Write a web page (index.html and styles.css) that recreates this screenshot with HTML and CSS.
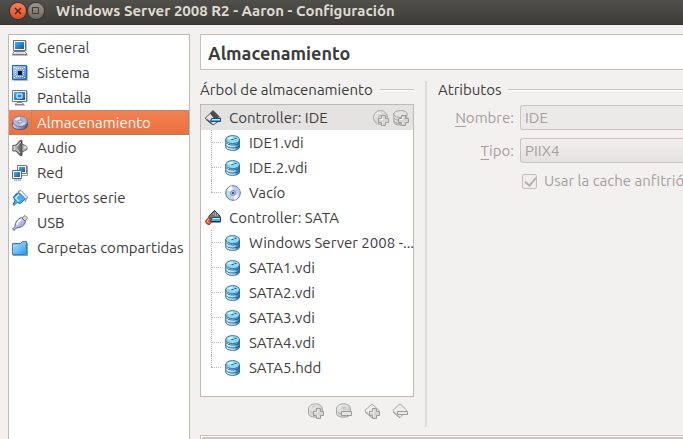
FILE: index.html
```html
<!DOCTYPE html>
<html lang="es">
<head>
<meta charset="utf-8">
<title>Windows Server 2008 R2 - Aaron - Configuración</title>
<link rel="stylesheet" href="styles.css">
</head>
<body>
<svg class="defs" aria-hidden="true">
  <defs>
    <linearGradient id="blue" x1="0" y1="0" x2="1" y2="1"><stop offset="0" stop-color="#3fb4f7"/><stop offset="1" stop-color="#0a56bd"/></linearGradient>
    <linearGradient id="chipfill" x1="0" y1="0" x2="1" y2="1"><stop offset="0" stop-color="#b3d6fc"/><stop offset="1" stop-color="#3a80e2"/></linearGradient>
    <linearGradient id="diskside" x1="0" x2="1"><stop offset="0" stop-color="#c9ecfd"/><stop offset=".45" stop-color="#8fd0f5"/><stop offset="1" stop-color="#2b78b5"/></linearGradient>
    <linearGradient id="drive" x1="0" x2="1"><stop offset="0" stop-color="#d6dbf0"/><stop offset=".5" stop-color="#8d94ba"/><stop offset="1" stop-color="#4b5174"/></linearGradient>
    <linearGradient id="folderfill" x1="0" y1="0" x2="1" y2="1"><stop offset="0" stop-color="#b5e3ff"/><stop offset="1" stop-color="#209af0"/></linearGradient>
    <linearGradient id="steel" x1="0" y1="0" x2="1" y2="0"><stop offset="0" stop-color="#e8e8e8"/><stop offset="1" stop-color="#4c4c4c"/></linearGradient>
    <linearGradient id="plugfill" x1="0" y1="0" x2="1" y2="1"><stop offset="0" stop-color="#fff"/><stop offset="1" stop-color="#7e80cf"/></linearGradient>
    <linearGradient id="gray" x1="0" y1="0" x2="1" y2="1"><stop offset="0" stop-color="#f3f3f2"/><stop offset="1" stop-color="#bcbcba"/></linearGradient>
  </defs>
  <symbol id="general" viewBox="0 0 16 16">
    <path d="M1.5.5h12v10h-12z" fill="#fff" stroke="#6c6c6c"/><path d="M3 2h9v7H3z" fill="url(#blue)"/>
    <path d="M2 11.500h11l2 3H.5z" fill="#f4f4f4" stroke="#777"/><path d="M3 13h9" stroke="#c4c4c4"/><path d="M0 15.500h16M14.500 1v10" stroke="#666" opacity=".4"/>
  </symbol>
  <symbol id="sistema" viewBox="0 0 16 16">
    <path d="M.5.5h14v14H.5z" fill="url(#chipfill)" stroke="#2860b5"/><path d="M15.500 1v14.500H1" stroke="#777" opacity=".5" fill="none"/>
    <path d="M4 3.500h1M6 3.500h1M8 3.500h1M10 3.500h1M4 11.500h1M6 11.500h1M8 11.500h1M10 11.500h1M3 5.500h1M3 7.500h1M3 9.500h1M11 5.500h1M11 7.500h1M11 9.500h1M2 2.500h1M12 2.500h1M2 12.500h1M12 12.500h1" stroke="#fff"/>
    <path d="M6 6h4v4H6z" fill="#071525"/>
  </symbol>
  <symbol id="pantalla" viewBox="0 0 16 16">
    <path d="M.5.5h14v11H.5z" fill="#fff" stroke="#777"/><path d="M2 2h11v8H2z" fill="url(#blue)"/>
    <path d="M5 4h5v4H5z" fill="#1787e8" stroke="#fff"/><path d="M5 12.500h5l2 2H3z" fill="#eee" stroke="#888"/><path d="M15.500 1v11M3 15.500h10" stroke="#888" opacity=".5"/>
  </symbol>
  <symbol id="almacen" viewBox="0 0 16 16">
    <path d="M.5 6v4.500c0 5.500 15 5.500 15 0V6z" fill="url(#drive)" stroke="#555b83"/><ellipse cx="8" cy="6.300" rx="7.300" ry="5.300" fill="#aeb4d3" stroke="#7b80a6"/>
    <path d="M2.500 5c1-2 3.500-3 5.500-3v4z" fill="#dfe4f6"/><path d="M8 6.500l5.500 1.500c-1 1.800-3 2.500-5 2.800z" fill="#cfd5ea"/><ellipse cx="8" cy="6.500" rx="2.200" ry="1.500" fill="#ebd7d4" stroke="#6f7599" stroke-width=".7"/>
  </symbol>
  <symbol id="audio" viewBox="0 0 16 16">
    <path d="M.8 5.500L4 5l4-4.500h2v15H8L4 11H.8z" fill="url(#steel)" stroke="#555"/><path d="M5 6l4-4M5 9l3 4" stroke="#d8d8d8"/>
    <path d="M10 4l5 2.500v3L10 12z" fill="#b8b8b8" stroke="#666"/><path d="M12 7h3" stroke="#fff"/>
  </symbol>
  <symbol id="red" viewBox="0 0 16 16">
    <path d="M5.500.5h9v8h-9z" fill="#fff" stroke="#777"/><path d="M7 2h6v5H7z" fill="url(#blue)"/><path d="M10 10.500h5.500V1" fill="none" stroke="#999"/>
    <path d="M.5 5.500h9v8h-9z" fill="#fff" stroke="#666"/><path d="M2 7h6v5H2z" fill="url(#blue)"/><path d="M2 15h7" stroke="#888"/>
  </symbol>
  <symbol id="serie" viewBox="0 0 16 16">
    <path d="M6 1.500l3-1L15.500 7 13 12M5 2.500L1 8M2 12l3-2" stroke="#66809c" fill="none"/>
    <path d="M7 2.500L13.500 9 8 13.500l-3-1-3 3L1 14.500l2-4L1.500 7z" fill="#46aef2" stroke="#2465a8"/><path d="M7 4.500L3.500 8 7 11.500" fill="none" stroke="#bce9ff" stroke-width="1.500"/>
  </symbol>
  <symbol id="usb" viewBox="0 0 16 16">
    <path d="M10 3l3-2.500 2.500 2.500L13 6z" fill="#ddd" stroke="#777"/><path d="M9.500 2.500l4 4c-1 4-4 6-9 6.500L2 15.500.5 14 3 11.500c0-4 2.500-7.500 6.500-9z" fill="url(#plugfill)" stroke="#5c5f9c"/><path d="M5 10c.5-3 2-4.500 4-5.500" stroke="#fff" fill="none" stroke-width="1.500"/>
  </symbol>
  <symbol id="carpeta" viewBox="0 0 16 16">
    <path d="M.5 3.500h8l2-2h4v13H.5z" fill="#7ebff0" stroke="#3a80c0"/><path d="M1 5h9l2-2h2v11H1z" fill="url(#folderfill)"/><path d="M15.500 3v12.500H1" stroke="#2b6097" fill="none" opacity=".6"/>
  </symbol>
  <symbol id="disco" viewBox="0 0 16 16">
    <path d="M.7 4.500v7.500c0 4.500 13.800 4.500 13.800 0V4.500z" fill="url(#diskside)" stroke="#2b6490" stroke-width=".9"/>
    <path d="M1 7.500c1 3.500 12.500 3.500 13.300 0M1 10.500c1 3.500 12.500 3.500 13.300 0" fill="none" stroke="#1d5887" stroke-width=".9"/><path d="M1.700 8.900c1.500 2.300 6 2.800 9 2M1.700 11.900c1.500 2.300 6 2.800 9 2" fill="none" stroke="#e0f6ff" stroke-width=".8"/>
    <ellipse cx="7.600" cy="4.600" rx="6.900" ry="4" fill="#8fd7fd" stroke="#2b6f9f" stroke-width=".9"/><path d="M2.500 4c1-2 3-2.600 5-2.600v2.600z" fill="#dff5ff"/><path d="M6.500 4.500h2M9.500 3.500h2" stroke="#135f9b"/>
  </symbol>
  <symbol id="cd" viewBox="0 0 16 16">
    <circle cx="8" cy="8" r="7.300" fill="#cbd3ef" stroke="#5b6e9e"/><path d="M8 8L2 5a7 7 0 0 1 5-4z" fill="#fff"/><path d="M8 8l6 3a7 7 0 0 1-5 4z" fill="#f5f0ff"/><path d="M8 8l2-6.500a7 7 0 0 1 5 5z" fill="#b9c7fa"/><path d="M8 8l-6 3a7 7 0 0 0 4 3.500z" fill="#aadcf0"/>
    <circle cx="8" cy="8" r="2.500" fill="#a9c9e9" stroke="#6685ad" stroke-width=".8"/><circle cx="8" cy="8" r="1" fill="#163c65"/>
  </symbol>
  <symbol id="ide" viewBox="0 0 16 16">
    <path d="M.5 8L8 .5 15.500 8v2L8 15 .5 9z" fill="#e4e4e4" stroke="#555"/><path d="M5 3.500L8 .5l6 6-1 2H9z" fill="#4b4b4b"/><path d="M2 9.500l5 4.500" stroke="#555" stroke-width="1.500"/>
    <path d="M6.500 8.500h9v3h-10z" fill="#46aef4" stroke="#0e4b88"/><path d="M7 9.500h8" stroke="#c5eaff"/>
  </symbol>
  <symbol id="sata" viewBox="0 0 16 16">
    <path d="M4 6L9.500.5 15 6v3H4z" fill="#777" stroke="#303030"/><path d="M8 4h1M10 3h1M10 5h1M12 5h1" stroke="#ddd"/><path d="M4 7L.5 11l1 2.500L4 15l3-3.500z" fill="#ed5424" stroke="#c03a14"/><path d="M4 9l-2 2 2 2" stroke="#ffb18b" fill="none"/>
    <path d="M7 7.500h8.500v4H5.500z" fill="#46aef4" stroke="#0e4b88"/><path d="M6.500 12h9" stroke="#222"/><path d="M7.500 8.500h7" stroke="#d5f0ff"/>
  </symbol>
  <symbol id="mas" viewBox="0 0 16 16"><path d="M8.500 5.500h4v3h3v4h-3v3h-4v-3h-3v-4h3z" fill="#d6d6d4" stroke="#9c9c9a"/><path d="M9.500 7v2.500h-3M9.500 12v2" fill="none" stroke="#f0f0ef"/></symbol>
  <symbol id="cdmas" viewBox="0 0 16 16"><circle cx="7.500" cy="7.500" r="7" fill="url(#gray)" stroke="#a7a7a5"/><circle cx="7.500" cy="7.500" r="2" fill="none" stroke="#aaa"/><use href="#mas"/></symbol>
  <symbol id="discomas" viewBox="0 0 16 16"><path d="M.8 4v8c0 4 13 4 13 0V4z" fill="url(#gray)" stroke="#a5a5a3"/><ellipse cx="7.500" cy="4" rx="6.800" ry="3.500" fill="#e3e3e1" stroke="#a5a5a3"/><path d="M1 8c1 3 11 3 12 0M1 11c1 3 8 3 9 2" fill="none" stroke="#aaa"/><use href="#mas"/></symbol>
  <symbol id="medmas" viewBox="0 0 16 16"><path d="M.5 6c0-7 14-7 14 0v4.500c0 5-14 5-14 0z" fill="url(#gray)" stroke="#a7a7a5"/><path d="M2 8c2 3 6 3 8 2M4 4l3-1" fill="none" stroke="#bbb"/><use href="#mas"/></symbol>
  <symbol id="medmenos" viewBox="0 0 16 16"><path d="M.5 6c0-7 14-7 14 0v4.500c0 5-14 5-14 0z" fill="url(#gray)" stroke="#a7a7a5"/><path d="M6 5h3M2 9c1 1.500 3 2 4 2" fill="none" stroke="#aaa"/><path d="M5.500 8.500h10v4h-10z" fill="#e4e4e2" stroke="#9c9c9a"/></symbol>
  <symbol id="ctlmas" viewBox="0 0 16 16"><path d="M.8 7.500L8 .8l7 6.700-7 7z" fill="#eeeeec" stroke="#a5a5a3"/><path d="M1 9l7 6" stroke="#aaa"/><use href="#mas"/></symbol>
  <symbol id="ctlmenos" viewBox="0 0 16 16"><path d="M.8 7.500L8 .8l7 6.700-7 7z" fill="#eeeeec" stroke="#a5a5a3"/><path d="M1 9l7 6" stroke="#999"/><path d="M5.500 8.500h10v3h-10z" fill="#ececea" stroke="#999"/></symbol>
</svg>

<header class="titlebar">
  <button class="winbtn close" aria-label="Cerrar"><svg viewBox="0 0 16 16"><path d="M5 5l6 6M11 5l-6 6" stroke="#4a281c" stroke-width="1.500"/></svg></button>
  <button class="winbtn" aria-label="Maximizar"><svg viewBox="0 0 16 16"><path d="M4.500 4.500h6v6h-6z" fill="none" stroke="#3c3b37"/></svg></button>
  <h1>Windows Server 2008 R2 - Aaron - Configuración</h1>
</header>

<div class="window">
  <nav class="sidebar">
    <a href="#"><svg class="icon"><use href="#general"/></svg><span>General</span></a>
    <a href="#"><svg class="icon"><use href="#sistema"/></svg><span>Sistema</span></a>
    <a href="#"><svg class="icon"><use href="#pantalla"/></svg><span>Pantalla</span></a>
    <a href="#" class="selected" aria-current="page"><svg class="icon"><use href="#almacen"/></svg><span>Almacenamiento</span></a>
    <a href="#"><svg class="icon"><use href="#audio"/></svg><span>Audio</span></a>
    <a href="#"><svg class="icon"><use href="#red"/></svg><span>Red</span></a>
    <a href="#"><svg class="icon"><use href="#serie"/></svg><span>Puertos serie</span></a>
    <a href="#"><svg class="icon"><use href="#usb"/></svg><span>USB</span></a>
    <a href="#"><svg class="icon"><use href="#carpeta"/></svg><span>Carpetas compartidas</span></a>
  </nav>

  <main class="page">
    <h2 class="page-title">Almacenamiento</h2>
    <div class="columns">
      <section class="storage">
        <h3 class="group-title">Árbol de almacenamiento</h3>
        <div class="tree">
          <div class="controller current">
            <svg class="icon"><use href="#ide"/></svg><span class="name">Controller: IDE</span>
            <button class="tool" aria-label="Agregar CD"><svg class="icon"><use href="#cdmas"/></svg></button>
            <button class="tool" aria-label="Agregar disco"><svg class="icon"><use href="#discomas"/></svg></button>
          </div>
          <ul>
            <li><svg class="icon"><use href="#disco"/></svg><span>IDE1.vdi</span></li>
            <li><svg class="icon"><use href="#disco"/></svg><span>IDE.2.vdi</span></li>
            <li><svg class="icon"><use href="#cd"/></svg><span>Vacío</span></li>
          </ul>
          <div class="controller"><svg class="icon"><use href="#sata"/></svg><span class="name">Controller: SATA</span></div>
          <ul>
            <li><svg class="icon"><use href="#disco"/></svg><span>Windows Server 2008 -...</span></li>
            <li><svg class="icon"><use href="#disco"/></svg><span>SATA1.vdi</span></li>
            <li><svg class="icon"><use href="#disco"/></svg><span>SATA2.vdi</span></li>
            <li><svg class="icon"><use href="#disco"/></svg><span>SATA3.vdi</span></li>
            <li><svg class="icon"><use href="#disco"/></svg><span>SATA4.vdi</span></li>
            <li><svg class="icon"><use href="#disco"/></svg><span>SATA5.hdd</span></li>
          </ul>
        </div>
        <div class="toolbar">
          <button class="tool" aria-label="Agregar conexión"><svg class="icon"><use href="#medmas"/></svg></button>
          <button class="tool" aria-label="Eliminar conexión"><svg class="icon"><use href="#medmenos"/></svg></button>
          <button class="tool" aria-label="Agregar controlador"><svg class="icon"><use href="#ctlmas"/></svg></button>
          <button class="tool" aria-label="Eliminar controlador"><svg class="icon"><use href="#ctlmenos"/></svg></button>
        </div>
      </section>

      <section class="attributes">
        <h3 class="group-title">Atributos</h3>
        <div class="fields">
          <label for="nombre"><u>N</u>ombre:</label>
          <input id="nombre" class="field" type="text" value="IDE" disabled>
          <label for="tipo"><u>T</u>ipo:</label>
          <select id="tipo" class="field" disabled><option>PIIX4</option></select>
          <div class="check">
            <input id="cache" type="checkbox" checked disabled>
            <label for="cache">Usar la cache anfitrió</label>
          </div>
        </div>
      </section>
    </div>
    <div class="description"></div>
  </main>
</div>
</body>
</html>
```

FILE: styles.css
```css
* { box-sizing: border-box; }

body {
  margin: 0;
  height: 100vh;
  overflow: hidden;
  display: flex;
  flex-direction: column;
  background: #f2f1f0;
  color: #3c3c3c;
  font: 15px/24px Ubuntu, "Noto Sans", "Open Sans", sans-serif;
}

h1, h2, h3, ul { margin: 0; padding: 0; }
button { padding: 0; border: 0; background: none; }

.defs { position: absolute; width: 0; height: 0; }
.icon { display: block; flex: none; width: 16px; height: 16px; }

.titlebar {
  flex: none;
  display: flex;
  align-items: center;
  gap: 2px;
  height: 25px;
  padding: 0 10px 2px;
  background: linear-gradient(#504f49, #3d3c38);
  border-bottom: 1px solid #33322e;
}
.titlebar h1 {
  margin-left: 10px;
  color: #dfdbd2;
  font-size: 15px;
  line-height: 22px;
  white-space: nowrap;
}
.winbtn {
  width: 16px;
  height: 16px;
  border-radius: 50%;
  background: linear-gradient(#98968d, #6b6962);
  box-shadow: 0 0 0 1px #33322e;
}
.winbtn.close { background: linear-gradient(#fa8054, #e34d1c); }
.winbtn svg { display: block; width: 16px; height: 16px; }

.window {
  flex: 1;
  min-height: 0;
  display: flex;
  gap: 10px;
  padding: 9px 0 0 8px;
}

.sidebar {
  flex: none;
  width: 182px;
  border: 1px solid #bdbab6;
  border-bottom: 0;
  background: #fff;
}
.sidebar a {
  display: flex;
  align-items: center;
  height: 25px;
  padding-left: 3px;
  gap: 3px;
  color: inherit;
  text-decoration: none;
  white-space: nowrap;
}
.sidebar span {
  flex: 1;
  height: 25px;
  padding-left: 6px;
  line-height: 26px;
}
.sidebar .selected {
  color: #fff;
  background: linear-gradient(#f58252, #e9703c);
}
.sidebar .selected span {
  outline: 1px dotted #6c9292;
  outline-offset: -1px;
}

.page {
  flex: 1;
  min-width: 0;
  display: flex;
  flex-direction: column;
}
.page-title {
  flex: none;
  height: 36px;
  padding-left: 7px;
  border: 1px solid #c4c1bd;
  border-right: 0;
  background: #fff;
  font-size: 18px;
  line-height: 36px;
}
.columns {
  flex: 1;
  min-height: 0;
  display: flex;
  gap: 11px;
  padding: 8px 0;
}
.group-title {
  display: flex;
  align-items: center;
  gap: 7px;
  font-size: 15px;
  font-weight: 400;
  white-space: nowrap;
}
.group-title::after {
  content: "";
  flex: 1;
  height: 2px;
  background: linear-gradient(#c6c3bf 50%, #fff 50%);
}

.storage {
  flex: none;
  width: 214px;
}
.tree {
  margin-top: 2px;
  padding-bottom: 16px;
  border: 1px solid #bdbab6;
  background: #fff;
}
.controller, .tree li {
  display: flex;
  align-items: center;
  gap: 8px;
  height: 25px;
  padding: 0 4px;
  white-space: nowrap;
}
.controller .name { flex: 1; }
.controller .tool + .tool { margin-left: -4px; }
.current { background: #e4e3e1; }
.tree ul {
  padding-left: 10px;
  list-style: none;
}
.tree li {
  position: relative;
  padding: 0 0 0 14px;
}
.tree li::before, .tree li::after {
  content: "";
  position: absolute;
  left: 0;
}
.tree li::before {
  top: 0;
  height: 25px;
  border-left: 1px dotted #b5b5b5;
}
.tree li:last-child::before { height: 12px; }
.tree li::after {
  top: 12px;
  width: 10px;
  border-top: 1px dotted #b5b5b5;
}
.toolbar {
  display: flex;
  justify-content: flex-end;
  gap: 12px;
  padding: 6px 6px 0;
}

.attributes {
  flex: 1;
  min-width: 0;
  margin-top: 3px;
  padding-left: 11px;
  border-left: 2px solid #dddbd8;
}
.attributes .group-title { margin-top: -3px; }
.fields {
  display: grid;
  grid-template-columns: 76px 1fr;
  gap: 8px 6px;
  align-items: center;
  margin-top: 3px;
  color: #a3a09d;
}
.fields > label { text-align: right; }
.fields u { text-underline-offset: 3px; }
.field {
  width: 100%;
  height: 25px;
  margin: 0;
  padding: 0 4px;
  border: 1px solid #c8c5c1;
  border-right: 0;
  border-radius: 3px 0 0 3px;
  background: #ebeae9;
  color: #a3a09d;
  font: inherit;
  opacity: 1;
  appearance: none;
}
select.field { background: linear-gradient(#f1f0ef, #e3e2e0); }
.check {
  grid-column: 2;
  display: flex;
  align-items: center;
  gap: 7px;
  margin-top: -2px;
  padding-left: 2px;
  overflow: hidden;
  white-space: nowrap;
}
.check input {
  flex: none;
  width: 15px;
  height: 15px;
  margin: 0;
  border: 1px solid #c3c0bc;
  border-radius: 2px;
  background: #efeeed;
  appearance: none;
}
.check input::after {
  content: "";
  display: block;
  width: 5px;
  height: 9px;
  margin-left: 4px;
  border: solid #b5b2ae;
  border-width: 0 2px 2px 0;
  transform: rotate(40deg);
}

.description {
  flex: none;
  height: 4px;
  border: solid #c6c3bf;
  border-width: 1px 0 0 1px;
  background: #c9c5c1;
  box-shadow: inset 1px 1px #fff;
}
```
